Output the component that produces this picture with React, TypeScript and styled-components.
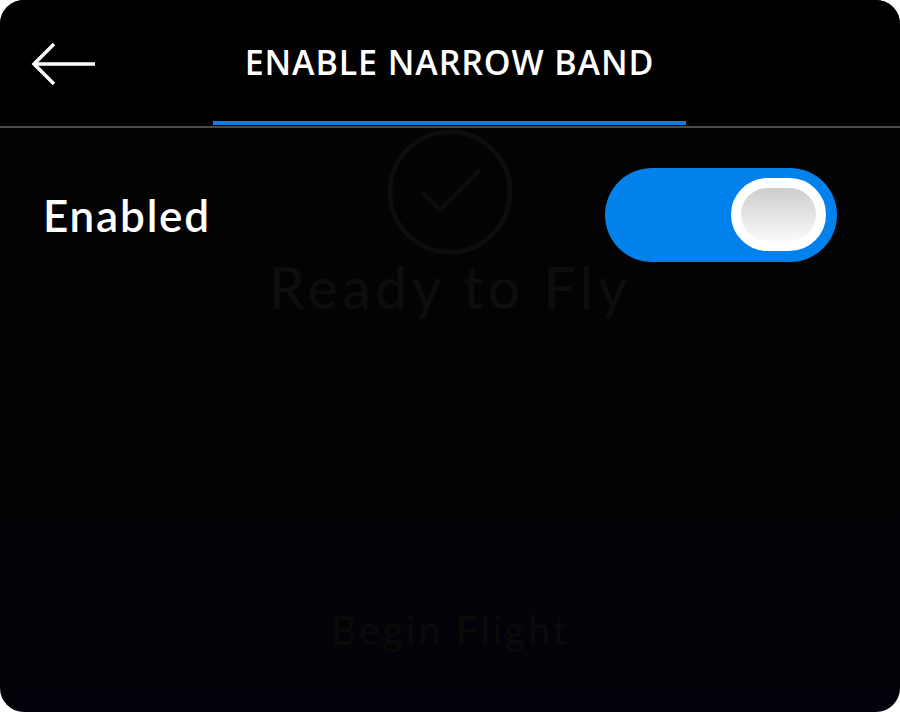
import React, { FunctionComponent, useState } from "react";
import styled, { createGlobalStyle } from "styled-components";

const GlobalStyle = createGlobalStyle`
  html, body {
    margin: 0;
    padding: 0;
    background: #ffffff;
  }
  * {
    box-sizing: border-box;
  }
`;

const Frame = styled.div`
  position: relative;
  width: 900px;
  height: 712px;
  border-radius: 24px;
  overflow: hidden;
  background: linear-gradient(180deg, #030303 0%, #030303 55%, #02020a 100%);
  display: flex;
  flex-direction: column;
`;

// faded screen that sits behind this panel
const Backdrop = styled.div`
  position: absolute;
  inset: 0;
  display: flex;
  flex-direction: column;
  align-items: center;
  padding-top: 128px;
  pointer-events: none;
  font-family: Lato, "Noto Sans", sans-serif;
  color: #0d0d0d;
`;

const BackdropTitle = styled.div`
  margin-top: -4px;
  font-size: 58px;
  font-weight: 500;
  letter-spacing: 4px;
  line-height: 70px;
`;

const BackdropButton = styled.div`
  margin-top: auto;
  margin-bottom: 58px;
  font-size: 40px;
  font-weight: 500;
  letter-spacing: 2.5px;
  color: #0a0a08;
`;

const Header = styled.header`
  position: relative;
  z-index: 1;
  height: 128px;
  background: #000000;
  border-bottom: 2px solid #4b4b4b;
  display: grid;
  grid-template-columns: 213px 473px 1fr;
`;

const BackButton = styled.button`
  align-self: start;
  margin: 42px 0 0 31px;
  padding: 0;
  width: 66px;
  height: 44px;
  border: none;
  background: none;
  cursor: pointer;
  display: flex;
  align-items: center;
`;

const Title = styled.h1`
  margin: 0 0 1px;
  display: flex;
  align-items: flex-start;
  justify-content: center;
  padding-top: 45px;
  border-bottom: 4px solid #0a7fe9;
  font-family: "Open Sans", "Noto Sans", sans-serif;
  font-size: 34px;
  line-height: 34px;
  font-weight: 600;
  letter-spacing: 0.9px;
  white-space: nowrap;
  color: #ffffff;
`;

const Body = styled.main`
  position: relative;
  z-index: 1;
  display: flex;
  flex-direction: column;
`;

const SettingRow = styled.div`
  display: flex;
  align-items: center;
  justify-content: space-between;
  padding: 40px 63px 0 43px;
`;

const Label = styled.span`
  font-family: Lato, "Noto Sans", sans-serif;
  font-size: 44px;
  font-weight: 600;
  letter-spacing: 1.8px;
  color: #ffffff;
`;

const Track = styled.button<{ $on: boolean }>`
  width: 232px;
  height: 94px;
  border: none;
  border-radius: 47px;
  padding: 10px 11px;
  background: ${props => (props.$on ? "#0081ec" : "#3a3a3a")};
  display: flex;
  justify-content: ${props => (props.$on ? "flex-end" : "flex-start")};
  align-items: flex-start;
  cursor: pointer;
`;

const Knob = styled.span`
  width: 95px;
  height: 73px;
  border-radius: 37px;
  border: 10px solid #ffffff;
  background: linear-gradient(180deg, #cdcdcd 0%, #e6e6e6 55%, #fafafa 100%);
`;

const BackArrow = () => (
  <svg width="66" height="44" viewBox="0 0 66 44" fill="none">
    <path
      d="M64 22H4M23 2L3 22L23 42"
      stroke="#ffffff"
      strokeWidth="3.5"
    />
  </svg>
);

const CheckCircle = () => (
  <svg width="128" height="128" viewBox="0 0 128 128" fill="none">
    <circle cx="64" cy="64" r="60" stroke="#0d0d0d" strokeWidth="5" />
    <path d="M36 64L54 82L94 42" stroke="#0d0d0d" strokeWidth="5" />
  </svg>
);

const App: FunctionComponent = () => {
  const [enabled, setEnabled] = useState(true);

  return (
    <>
      <GlobalStyle />
      <Frame>
        <Backdrop>
          <CheckCircle />
          <BackdropTitle>Ready to Fly</BackdropTitle>
          <BackdropButton>Begin Flight</BackdropButton>
        </Backdrop>
        <Header>
          <BackButton aria-label="Back">
            <BackArrow />
          </BackButton>
          <Title>ENABLE NARROW BAND</Title>
        </Header>
        <Body>
          <SettingRow>
            <Label>Enabled</Label>
            <Track $on={enabled} onClick={() => setEnabled(!enabled)}>
              <Knob />
            </Track>
          </SettingRow>
        </Body>
      </Frame>
    </>
  );
};

export default App;
